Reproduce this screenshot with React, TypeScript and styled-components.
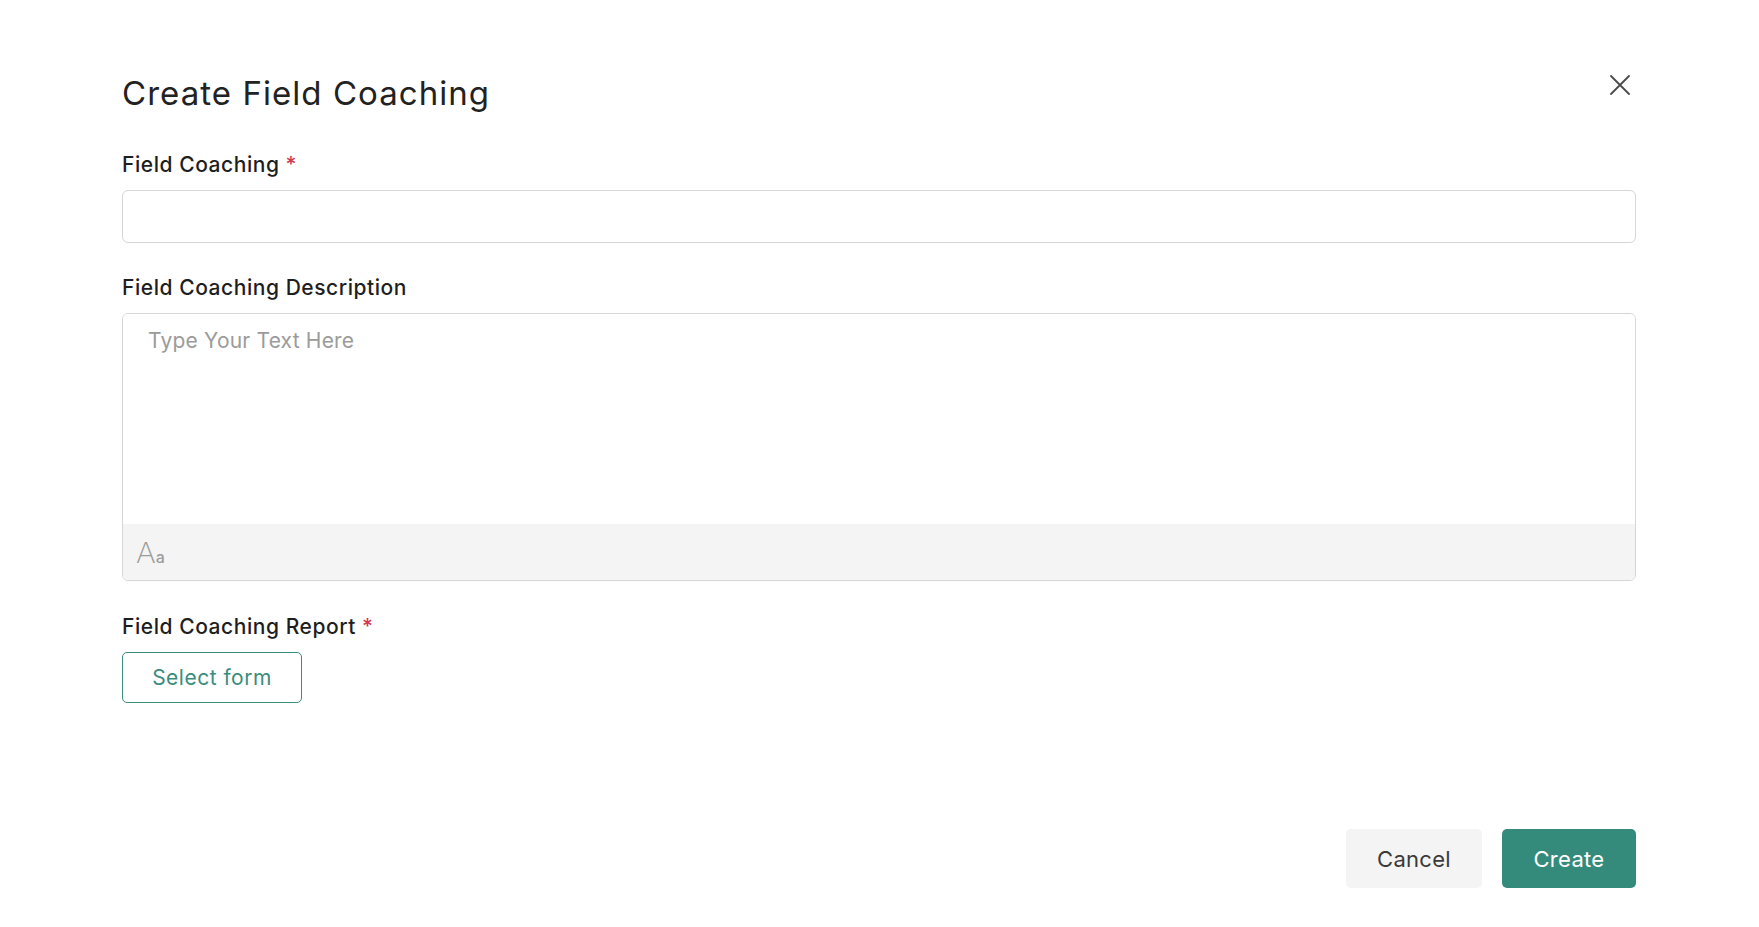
import React from "react";
import styled, { createGlobalStyle } from "styled-components";

const GlobalStyle = createGlobalStyle`
  html, body { margin: 0; padding: 0; background: #ffffff; }
  body { font-family: "Inter", "Noto Sans", sans-serif; color: #1e1e1e; }
  * { box-sizing: border-box; }
`;

const Dialog = styled.div`
  display: flex;
  flex-direction: column;
  padding: 73px 123px 0 122px;
  width: 1759px;
  min-height: 927px;
  background: #fff;
`;

const Header = styled.div`
  display: flex;
  justify-content: space-between;
  align-items: flex-start;
`;

const Title = styled.h1`
  margin: 0;
  font-size: 33px;
  line-height: 40px;
  font-weight: 400;
  color: #222222;
  letter-spacing: 1.05px;
`;

const CloseButton = styled.button`
  width: 32px;
  height: 32px;
  margin-top: -4px;
  border: none;
  background: transparent;
  padding: 0;
  display: flex;
  align-items: center;
  justify-content: center;
  cursor: pointer;
  color: #4a4a4a;
`;

const Form = styled.div`
  display: flex;
  flex-direction: column;
  margin-top: 37px;
`;

const Field = styled.div<{ $gapTop?: number }>`
  display: flex;
  flex-direction: column;
  gap: 11px;
  margin-top: ${(p) => p.$gapTop ?? 0}px;
`;

const Label = styled.label`
  padding-top: 1px;
  font-size: 21px;
  line-height: 28px;
  font-weight: 500;
  color: #1e1e1e;
  letter-spacing: 0.55px;
`;

const Required = styled.span`
  color: #d2384f;
  margin-left: 6px;
`;

const TextInput = styled.input`
  height: 53px;
  width: 100%;
  border: 1px solid #d6d6d6;
  border-radius: 6px;
  padding: 0 16px;
  font-family: inherit;
  font-size: 21px;
  outline: none;
`;

const Editor = styled.div`
  display: flex;
  flex-direction: column;
  border: 1px solid #d6d6d6;
  border-radius: 6px;
  overflow: hidden;
`;

const EditorArea = styled.textarea`
  height: 210px;
  border: none;
  resize: none;
  padding: 13px 25px;
  font-family: inherit;
  font-size: 21px;
  line-height: 28px;
  color: #222;
  outline: none;
  letter-spacing: 0.2px;
  &::placeholder { color: #9b9b9b; }
`;

const Toolbar = styled.div`
  height: 56px;
  background: #f4f4f4;
  display: flex;
  align-items: center;
  padding: 2px 13px 0;
`;

const FontIcon = styled.span`
  display: inline-flex;
  align-items: baseline;
  color: #9c9c9c;
  line-height: 1;
`;

const BigA = styled.span`
  font-size: 29px;
  font-family: "DejaVu Sans", sans-serif;
  font-weight: 200;
`;

const SmallA = styled.span`
  font-size: 16px;
  font-family: "Inter", sans-serif;
  font-weight: 500;
`;

const OutlineButton = styled.button`
  align-self: flex-start;
  width: 180px;
  height: 51px;
  border: 1px solid #3a8c7d;
  border-radius: 5px;
  background: #fff;
  color: #3a8c7d;
  font-family: inherit;
  font-size: 21px;
  letter-spacing: 0.5px;
  cursor: pointer;
`;

const Footer = styled.div`
  display: flex;
  justify-content: flex-end;
  gap: 20px;
  margin-top: 126px;
`;

const FooterButton = styled.button<{ $primary?: boolean }>`
  height: 59px;
  width: ${(p) => (p.$primary ? 134 : 136)}px;
  border: none;
  border-radius: 5px;
  background: ${(p) => (p.$primary ? "#358b7b" : "#f4f4f4")};
  color: ${(p) => (p.$primary ? "#ffffff" : "#3a3a3a")};
  font-family: inherit;
  font-size: 22px;
  letter-spacing: 0.3px;
  cursor: pointer;
`;

export default function App() {
  return (
    <>
      <GlobalStyle />
      <Dialog>
        <Header>
          <Title>Create Field Coaching</Title>
          <CloseButton aria-label="Close">
            <svg width="22" height="22" viewBox="0 0 22 22" fill="none">
              <path d="M2 2L20 20M20 2L2 20" stroke="#4a4a4a" strokeWidth="1.8" strokeLinecap="round" />
            </svg>
          </CloseButton>
        </Header>
        <Form>
          <Field>
            <Label>
              Field Coaching<Required>*</Required>
            </Label>
            <TextInput />
          </Field>
          <Field $gapTop={30}>
            <Label>Field Coaching Description</Label>
            <Editor>
              <EditorArea placeholder="Type Your Text Here" />
              <Toolbar>
                <FontIcon>
                  <BigA>A</BigA>
                  <SmallA>a</SmallA>
                </FontIcon>
              </Toolbar>
            </Editor>
          </Field>
          <Field $gapTop={31}>
            <Label>
              Field Coaching Report<Required>*</Required>
            </Label>
            <OutlineButton>Select form</OutlineButton>
          </Field>
        </Form>
        <Footer>
          <FooterButton>Cancel</FooterButton>
          <FooterButton $primary>Create</FooterButton>
        </Footer>
      </Dialog>
    </>
  );
}
